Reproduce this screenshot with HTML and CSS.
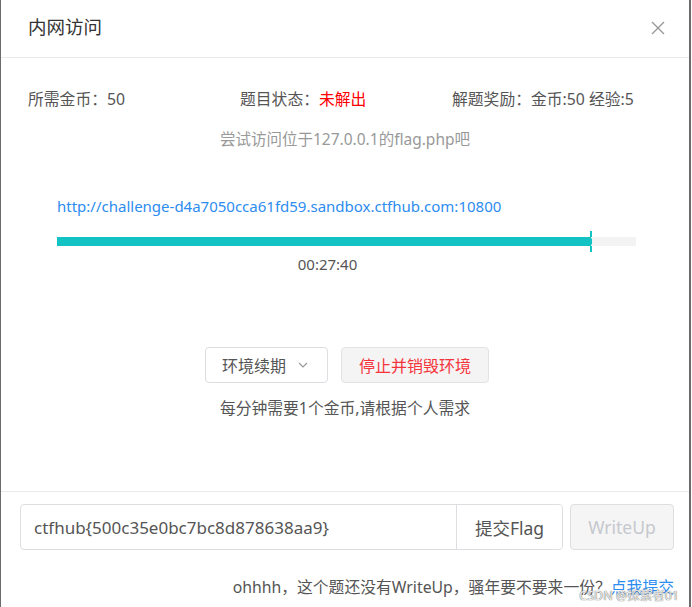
FILE: index.html
```html
<!DOCTYPE html>
<html lang="zh">
<head>
  <meta charset="UTF-8">
  <title>内网访问</title>
  <link rel="stylesheet" href="styles.css">
</head>
<body>
  <div class="modal">
    <div class="modal-header">
      <div class="modal-title">内网访问</div>
      <svg class="close" width="14" height="14" viewBox="0 0 14 14">
        <path d="M1 1L13 13M13 1L1 13" stroke="#999" stroke-width="1.4" fill="none"/>
      </svg>
    </div>

    <div class="modal-body">
      <div class="info">
        <div class="info-item">所需金币：50</div>
        <div class="info-item">题目状态：<span class="red">未解出</span></div>
        <div class="info-item">解题奖励：金币:50 经验:5</div>
      </div>
      <div class="hint">尝试访问位于127.0.0.1的flag.php吧</div>

      <div class="env">
        <a class="env-url">http://challenge-d4a7050cca61fd59.sandbox.ctfhub.com:10800</a>
        <div class="progress">
          <div class="progress-fill" style="width: 92.2%"></div>
        </div>
        <div class="timer">00:27:40</div>
      </div>

      <div class="actions">
        <button class="btn btn-renew">环境续期
          <svg width="10" height="6" viewBox="0 0 10 6"><path d="M1 1L5 5L9 1" stroke="#999" stroke-width="1.2" fill="none"/></svg>
        </button>
        <button class="btn btn-destroy">停止并销毁环境</button>
      </div>
      <div class="note">每分钟需要1个金币,请根据个人需求</div>
    </div>

    <div class="modal-footer">
      <div class="flag-row">
        <div class="input-group">
          <input class="flag-input" type="text" value="ctfhub{500c35e0bc7bc8d878638aa9}">
          <button class="btn-submit">提交Flag</button>
        </div>
        <button class="btn-writeup" disabled>WriteUp</button>
      </div>
      <div class="wp-tip">ohhhh，这个题还没有WriteUp，骚年要不要来一份？<a class="link">点我提交</a></div>
    </div>
    <div class="watermark">CSDN @探索者01</div>
  </div>
</body>
</html>
```

FILE: styles.css
```css
body {
  margin: 0;
  padding: 0;
  background: #fff;
  font-family: "Noto Sans", "Noto Sans CJK SC", sans-serif;
  color: #515a6e;
}

.modal {
  position: relative;
  width: 691px;
  height: 607px;
  border-left: 1px solid #6b6b6b;
  border-right: 2px solid #6b6b6b;
  box-sizing: border-box;
  background: #fff;
  overflow: hidden;
}

.modal-header {
  height: 57px;
  border-bottom: 1px solid #e8eaec;
  display: flex;
  align-items: center;
  justify-content: space-between;
  padding: 0 24px 0 27px;
}

.modal-title {
  font-size: 18.5px;
  color: #333;
  margin-top: -5px;
}

.close {
  margin-top: -2px;
}

.modal-body {
  height: 434px;
  box-sizing: border-box;
  padding-top: 29px;
  border-bottom: 1px solid #e8eaec;
}

.info {
  display: grid;
  grid-template-columns: 212px 212px 1fr;
  padding-left: 27px;
  font-size: 15.8px;
  line-height: 24px;
  color: #555;
}

.red {
  color: #f00;
}

.hint {
  text-align: center;
  font-size: 15.5px;
  color: #999;
  margin-top: 16px;
  line-height: 24px;
}

.env {
  padding: 0 53px 0 56px;
  margin-top: 43px;
}

.env-url {
  display: block;
  color: #2d8cf0;
  font-size: 15px;
  line-height: 24px;
}

.progress {
  position: relative;
  margin-top: 19px;
  height: 9px;
  background: #f3f3f3;
}

.progress-fill {
  position: relative;
  height: 100%;
  background: #13c2c2;
}

.progress-fill::after {
  content: "";
  position: absolute;
  right: -1px;
  top: -6px;
  height: 21px;
  border-right: 2px dashed #13c2c2;
}

.timer {
  text-align: center;
  font-size: 15px;
  color: #555;
  line-height: 24px;
  margin-top: 6px;
  padding-right: 38px;
}

.actions {
  display: flex;
  justify-content: center;
  gap: 13px;
  margin-top: 71px;
  padding-left: 4px;
}

.btn {
  height: 36px;
  border-radius: 4px;
  font-family: inherit;
  font-size: 16px;
  padding: 0 16px;
  cursor: pointer;
}

.btn-renew {
  width: 123px;
  background: #fff;
  border: 1px solid #dcdee2;
  color: #555;
  display: flex;
  align-items: center;
  gap: 12px;
}

.btn-destroy {
  width: 148px;
  background: #f4f4f4;
  border: 1px solid #e3e3e3;
  color: #f4333b;
  padding: 0;
}

.note {
  text-align: center;
  font-size: 15.8px;
  color: #555;
  line-height: 24px;
  margin-top: 13px;
}

.modal-footer {
  padding: 12px 15px 0 19px;
}

.flag-row {
  display: flex;
  gap: 7px;
}

.input-group {
  display: flex;
  flex: 1;
  height: 46px;
  border: 1px solid #dcdee2;
  border-radius: 4px;
  box-sizing: border-box;
}

.flag-input {
  flex: 1;
  border: none;
  border-right: 1px solid #dcdee2;
  padding: 0 13px;
  font-family: inherit;
  font-size: 17px;
  color: #555;
  outline: none;
  border-radius: 4px 0 0 4px;
  background: transparent;
}

.btn-submit {
  width: 105px;
  border: none;
  background: #fff;
  font-family: inherit;
  font-size: 17.5px;
  color: #555;
  border-radius: 0 4px 4px 0;
}

.btn-writeup {
  width: 104px;
  height: 46px;
  border: 1px solid #dcdee2;
  border-radius: 4px;
  background: #f5f5f5;
  color: #c5c8ce;
  font-family: inherit;
  font-size: 17.5px;
}

.wp-tip {
  text-align: right;
  font-size: 15.8px;
  color: #555;
  margin-top: 25px;
  line-height: 24px;
}

.link {
  color: #2d8cf0;
}

.watermark {
  position: absolute;
  right: 10px;
  bottom: 3px;
  font-size: 12.5px;
  color: rgba(255, 255, 255, 0.85);
  text-shadow: 0 0 1px #777, 0 0 1px #777;
}
```
